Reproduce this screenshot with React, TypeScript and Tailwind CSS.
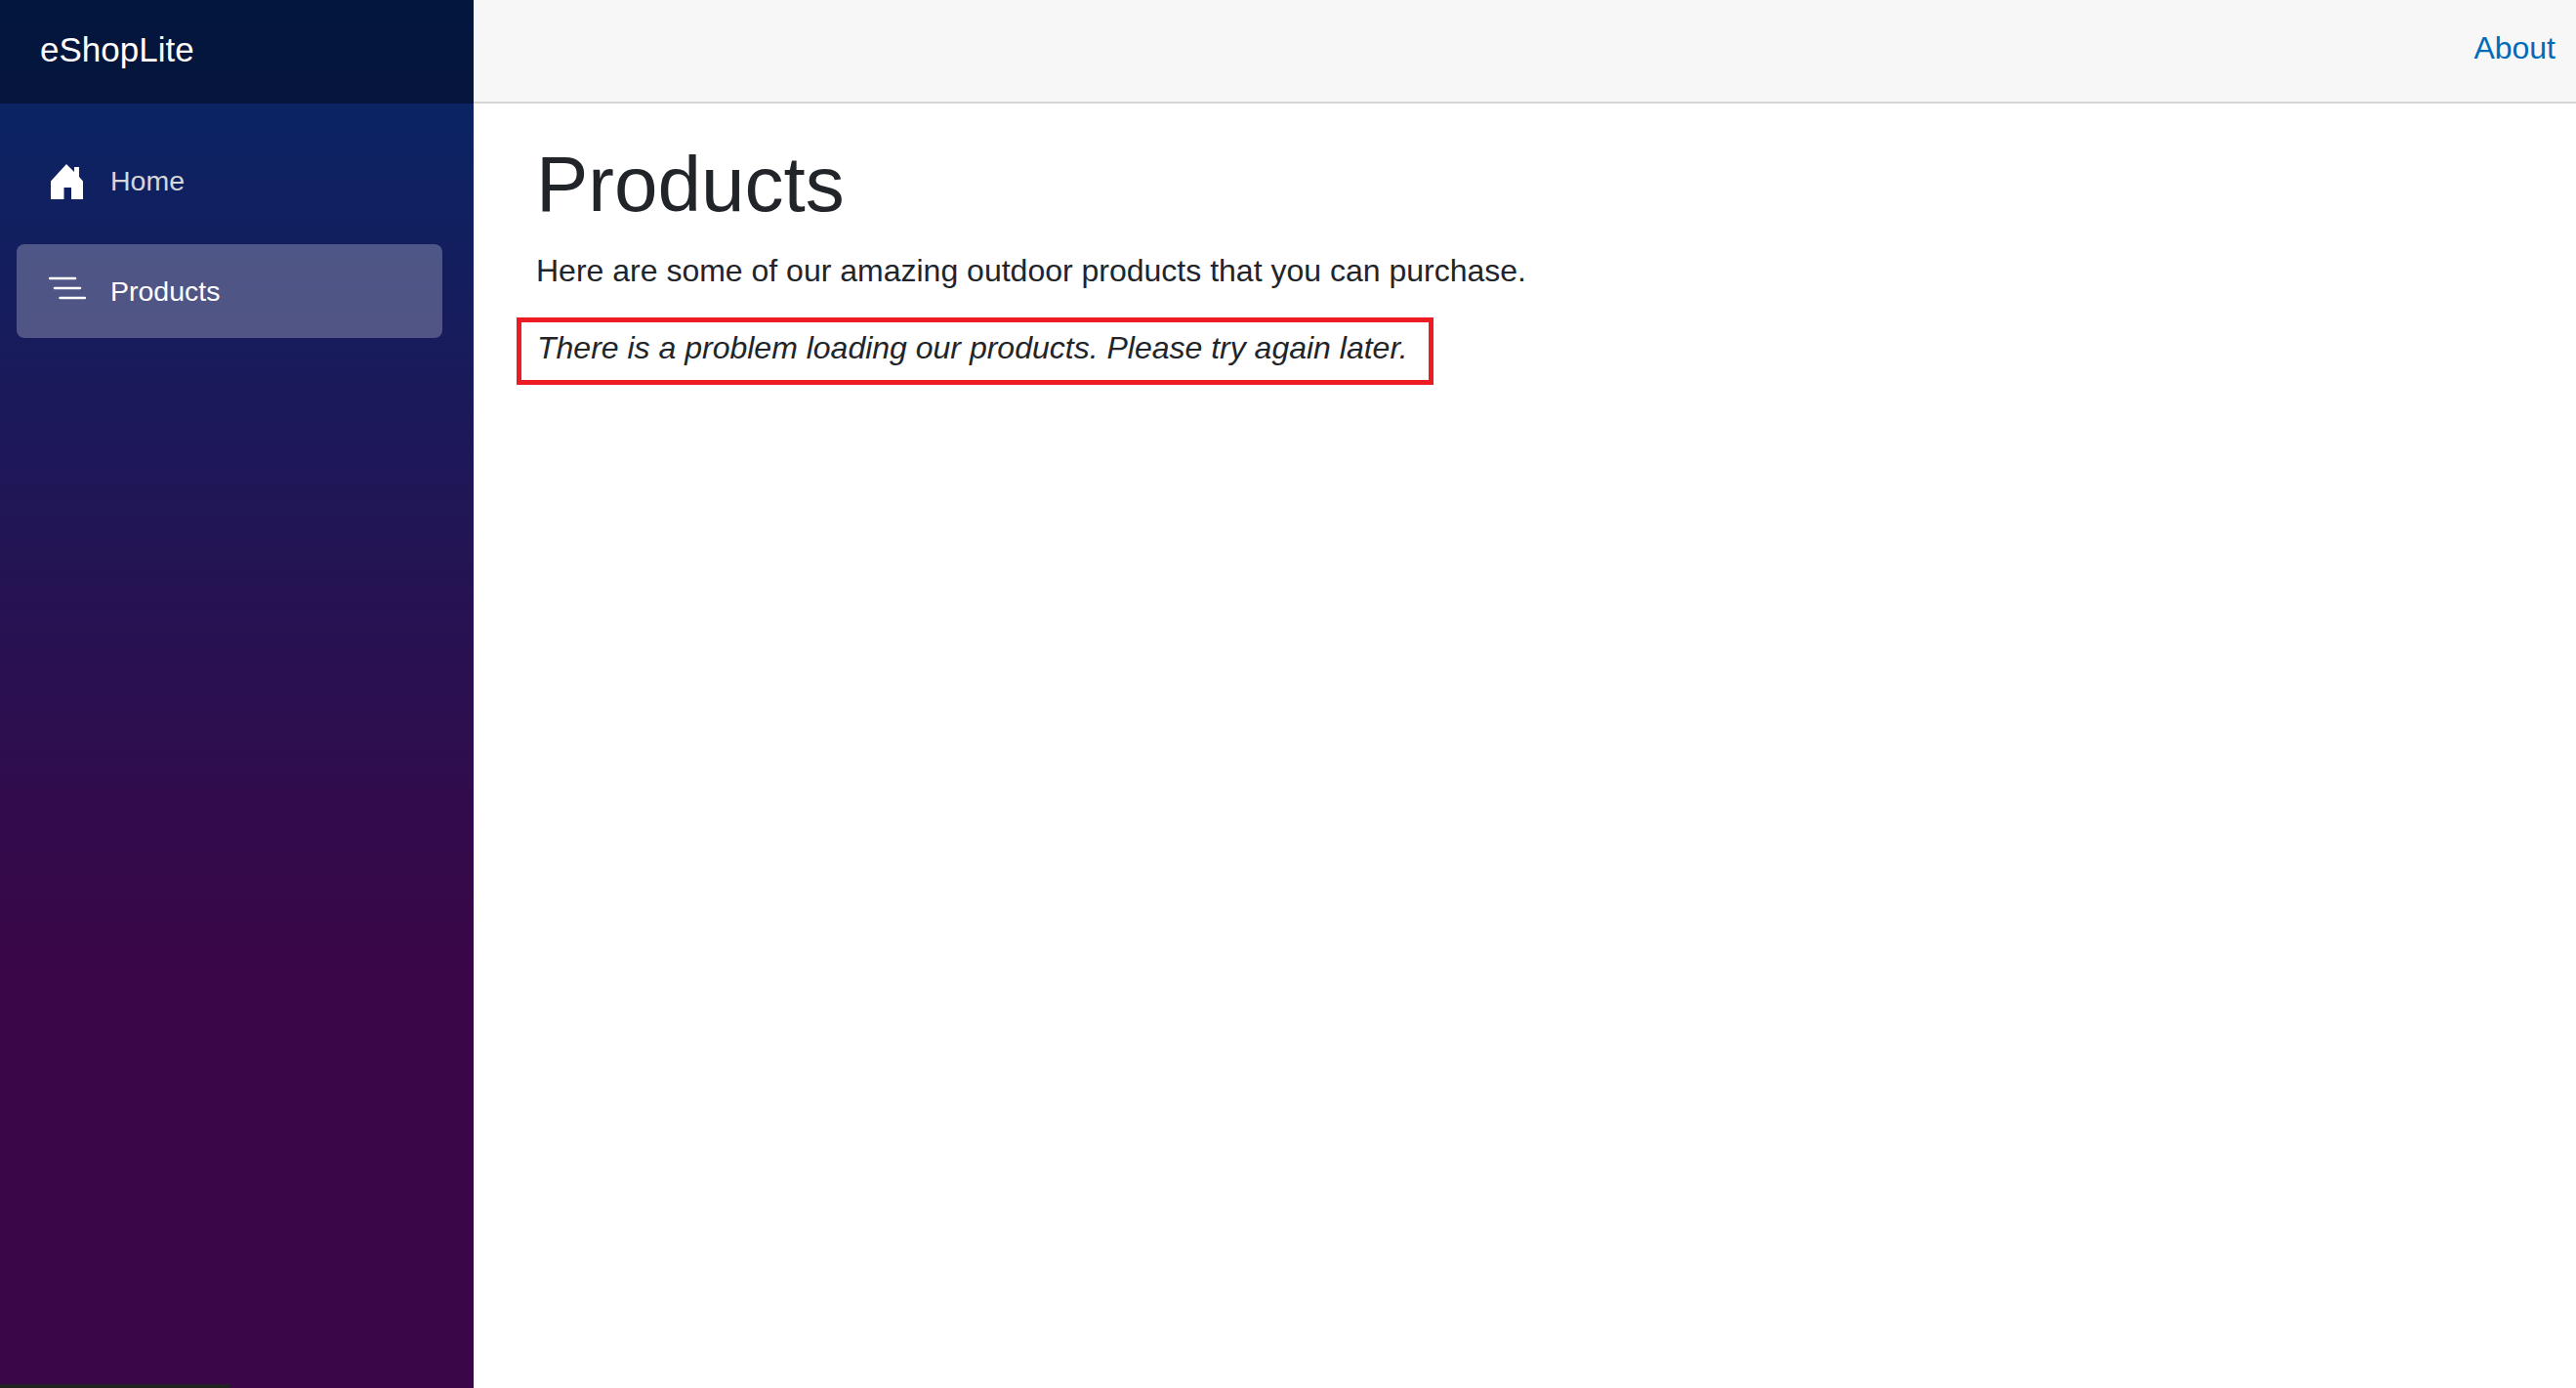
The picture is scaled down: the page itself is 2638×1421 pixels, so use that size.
export default function App() {
  const font = { fontFamily: '"Liberation Sans", Arial, sans-serif' };
  return (
    <div style={font} className="relative flex h-[1421px] w-[2638px] overflow-hidden bg-white font-['Liberation_Sans',sans-serif]">
      <aside className="flex h-full w-[485px] shrink-0 flex-col bg-[linear-gradient(180deg,#052767_0%,#3a0647_70%)]">
        <div className="flex h-[106px] shrink-0 items-center bg-black/40 pb-[6px] pl-[41px]">
          <span className="text-[35px] leading-none text-white">eShopLite</span>
        </div>
        <nav className="flex flex-col gap-[15px] pl-[17px] pr-[32px] pt-[33px]">
          <a className="flex h-[96px] items-center rounded-[8px] pb-[3px] pl-[33px] text-[28.5px] text-[#d7d7d7]">
            <svg width="38" height="38" viewBox="0 0 38 38" className="-ml-[1px] mr-[26px] shrink-0" fill="#fff">
              <path d="M19 1 L27 9 L27 4 L32 4 L32 14 L36 18.5 L36 37 L24 37 L24 25 L16.5 25 L16.5 37 L3 37 L3 18.5 Z" />
            </svg>
            Home
          </a>
          <a className="flex h-[96px] items-center rounded-[8px] bg-white/25 pl-[33px] text-[28.5px] text-white">
            <svg width="38" height="28" viewBox="0 0 38 28" className="mb-[4px] mr-[25px] shrink-0" stroke="#fff" strokeWidth="2.5" strokeLinecap="round">
              <path d="M1 3 H27 M6 13 H32 M11.5 23 H37" />
            </svg>
            Products
          </a>
        </nav>
      </aside>
      <main className="flex min-w-0 flex-1 flex-col">
        <header className="flex h-[106px] shrink-0 items-center justify-end border-b-2 border-[#d6d5d5] bg-[#f7f7f7] pb-[6px] pr-[21px]">
          <a className="text-[32px] leading-none text-[#006bb7]">About</a>
        </header>
        <section className="flex flex-col items-start pl-[64px] pt-[35px] text-[#212529]">
          <h1 className="text-[80px] font-normal leading-[96px]">Products</h1>
          <p className="mt-[16px] text-[32px] leading-[48px]">Here are some of our amazing outdoor products that you can purchase.</p>
          <div className="-ml-[20px] mt-[24px] flex h-[69px] w-[939px] items-center border-[5px] border-[#ed1c24] pb-[7px] pl-[16px]">
            <em className="text-[32px] leading-[48px]">There is a problem loading our products. Please try again later.</em>
          </div>
        </section>
      </main>
      <div className="absolute bottom-0 left-0 h-[4px] w-[235px] bg-[#222222]" />
    </div>
  );
}
